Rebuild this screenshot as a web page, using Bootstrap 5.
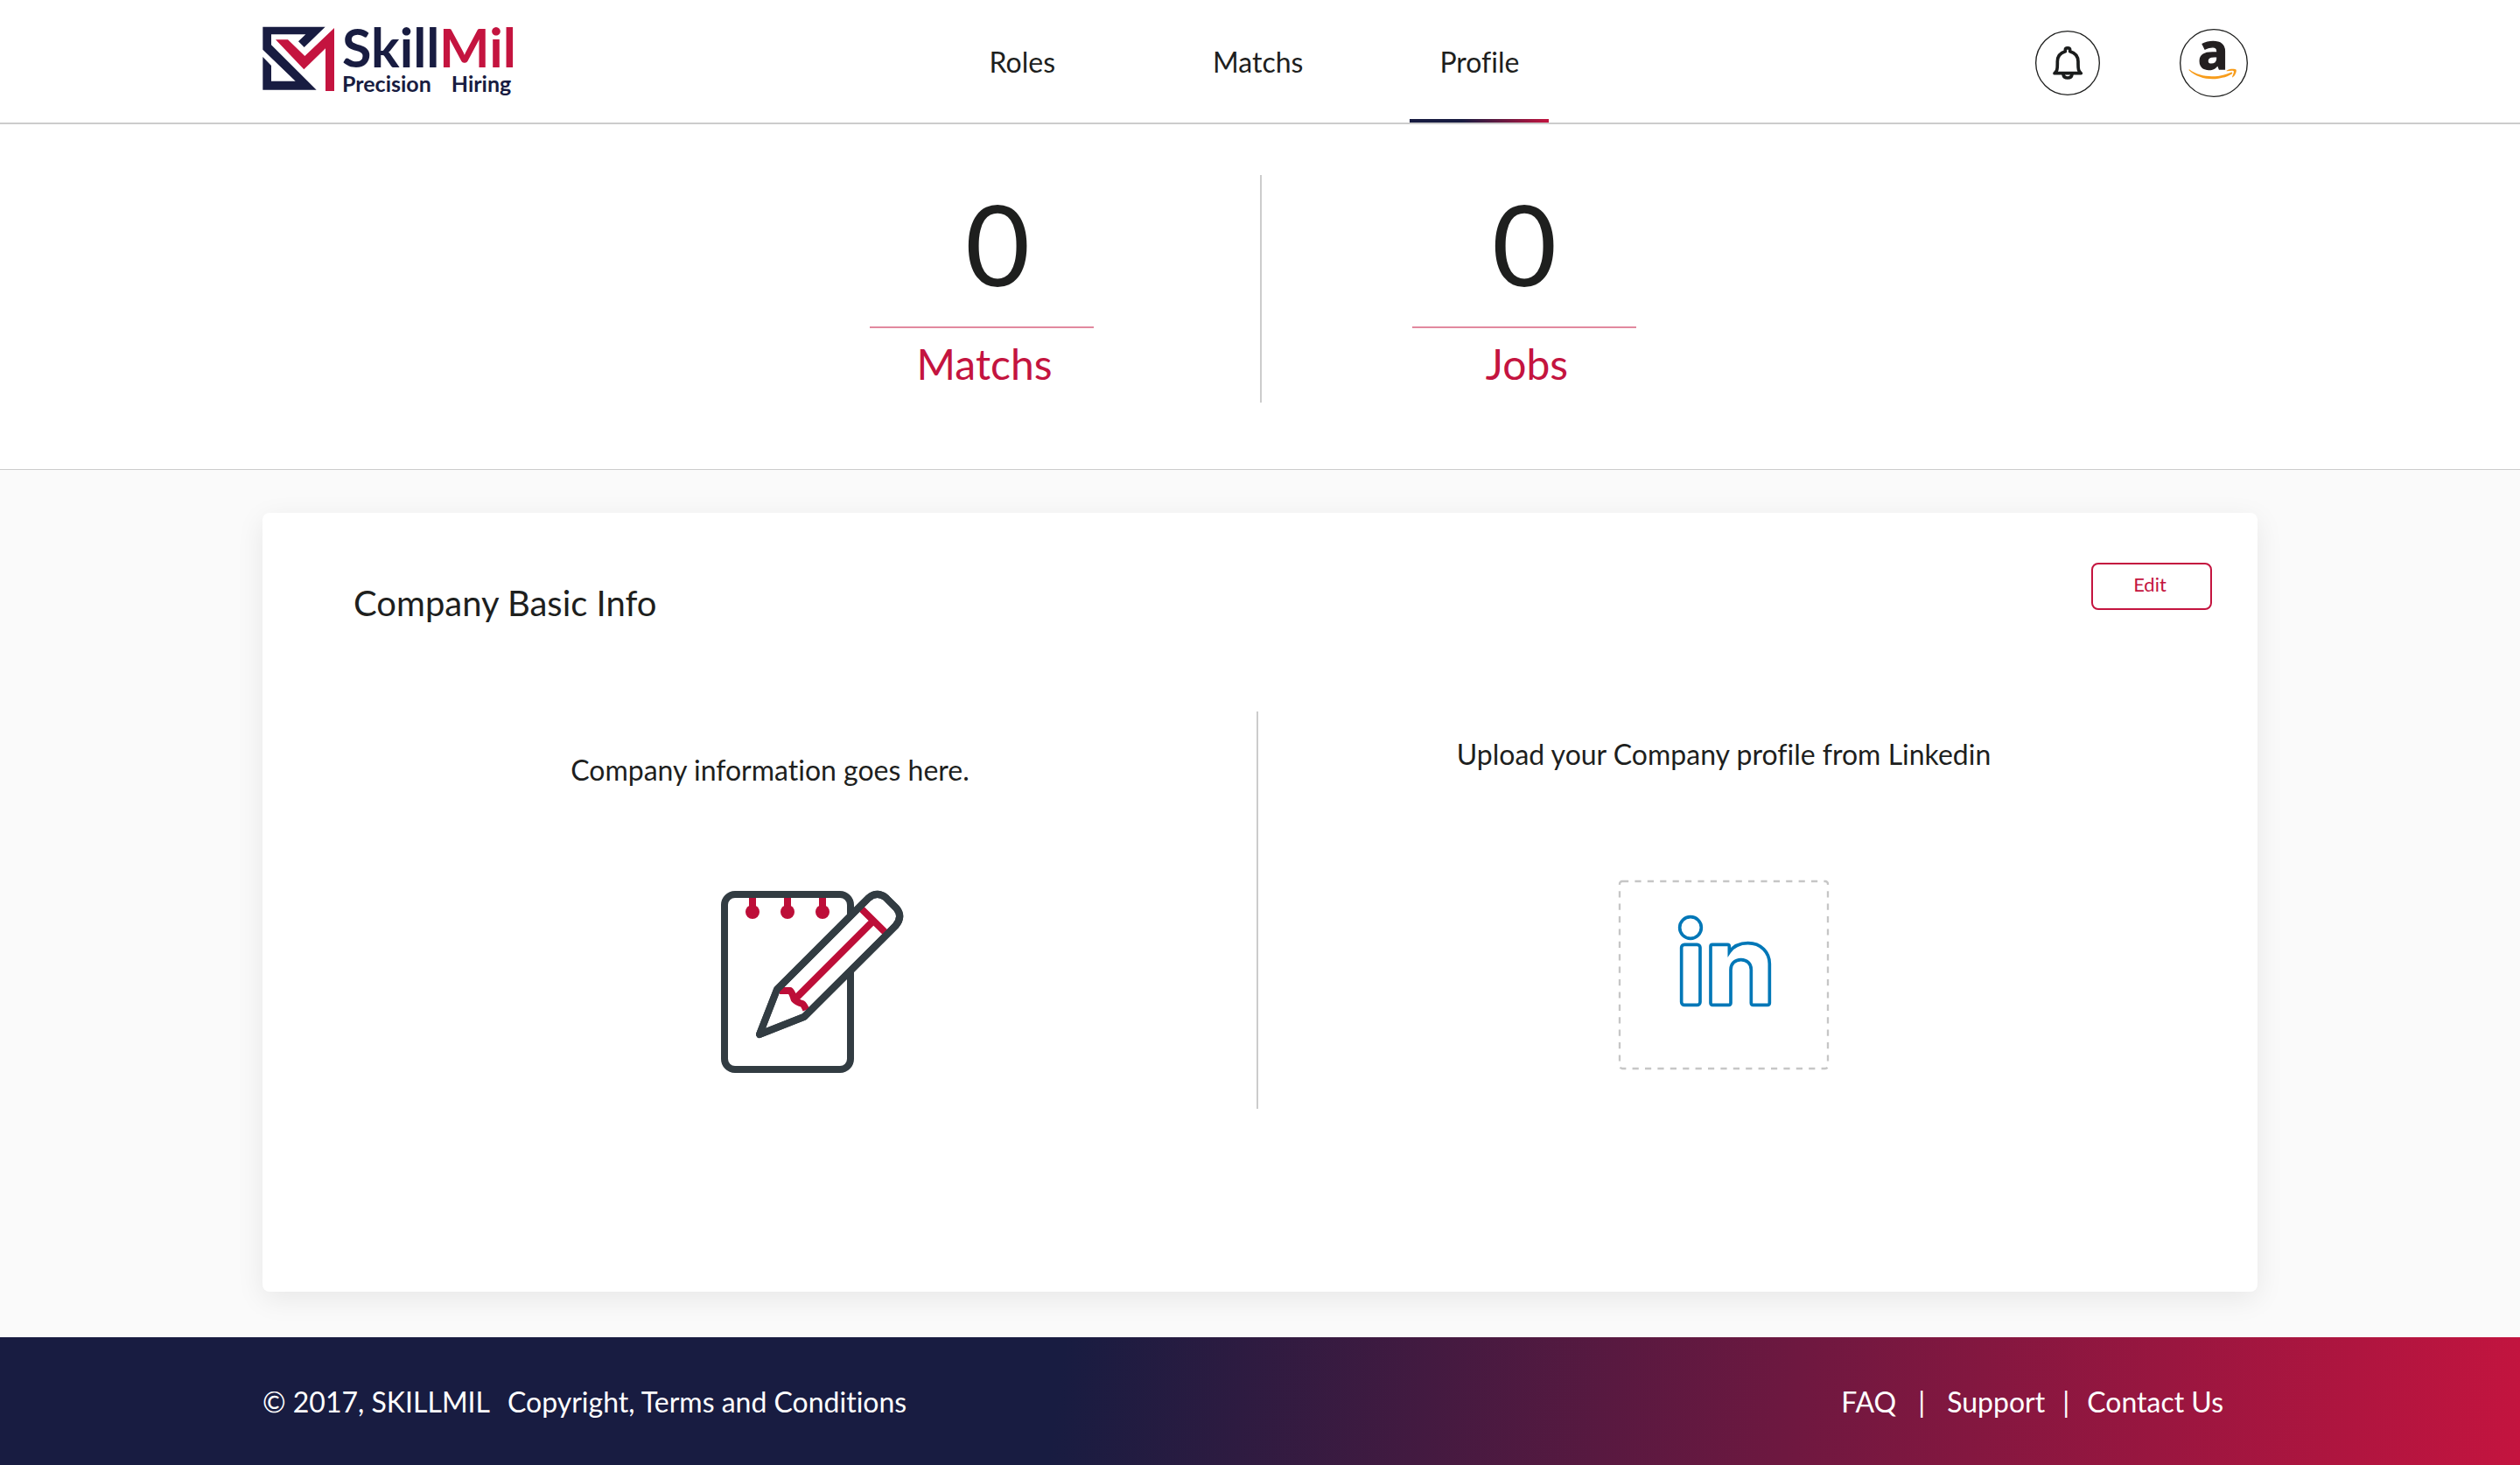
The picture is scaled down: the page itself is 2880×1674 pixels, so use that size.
<!DOCTYPE html>
<html lang="en">
<head>
<meta charset="utf-8">
<meta name="viewport" content="width=device-width, initial-scale=1">
<title>SkillMil – Company Profile</title>
<link href="https://cdn.jsdelivr.net/npm/bootstrap@5.3.0/dist/css/bootstrap.min.css" rel="stylesheet">
<style>
:root { --navy: #181c41; --crimson: #c4143f; --ink: #1e1f1e; --rule: #cccccc; }
body { font-family: Lato, "Noto Sans", sans-serif; font-size: 32px; line-height: 38px; font-variant-ligatures: no-common-ligatures; color: var(--ink); background: #fafafa; }
svg { display: block; flex: none; overflow: visible; }
a { color: inherit; text-decoration: none; }
.shell { width: 100%; max-width: 2280px; margin-inline: auto; }

.site-header { border-bottom: 2px solid var(--rule); }
.site-header .shell { height: 140px; }
.side { flex: 1 1 0; }
.brand { height: 80px; }
.brand-name { font-size: 61px; line-height: 48px; font-weight: 700; color: var(--navy); }
.brand-name span { color: var(--crimson); }
.tagline { font-size: 25px; line-height: 24px; font-weight: 700; color: var(--navy); gap: 23px; margin-top: 5px; }
.main-nav { gap: 88px; padding-right: 2px; }
.main-nav .nav-link { padding: 5px 34px 0; color: var(--ink); border-bottom: 4px solid transparent; }
.main-nav .nav-link.active { border-image: linear-gradient(95deg, var(--navy) 42%, var(--crimson)) 1; }
.main-nav .wide-end { margin-right: 24px; }
.header-tools { gap: 91px; padding: 3px 11px 0 0; }
.round-btn { padding: 0; border: 0; background: none; border-radius: 50%; }

.stats-row { padding: 58px 16px 76px 0; gap: 172px; min-height: 394px; }
.stat { width: 256px; }
.stat-first { margin-right: 18px; }
.stat-number { font-size: 128px; line-height: 156px; }
.stat-first .stat-number { padding-left: 36px; }
.stat-label { font-size: 48px; line-height: 58px; color: var(--crimson); border-top: 2px solid #e2899f; margin-top: 17px; padding: 12px 0 0 6px; }
.v-rule { width: 2px; background: var(--rule); flex: none; }

.profile-card { border: 0; border-radius: 8px; box-shadow: 0 8px 32px rgba(0, 0, 0, .08); margin: 49px auto 52px; padding-bottom: 209px; }
.card-top { padding: 57px 52px 100px 104px; }
.card-top h1 { font-size: 40px; line-height: 48px; font-weight: 400; margin: 22px 0 0; }
.edit-btn { width: 138px; font-size: 22px; line-height: 26px; padding: 10px 4px 14px 0; border: 2px solid var(--crimson); border-radius: 8px; color: var(--crimson); }
.edit-btn:hover { background: var(--crimson); color: #fff; }
.halves { padding-right: 6px; min-height: 454px; }
.half-info { padding: 48px 0 0 24px; gap: 119px; }
.half-info svg { margin-left: 96px; }
.half-upload { padding: 30px 72px 0 0; gap: 125px; }

.site-footer { color: #fff; background: linear-gradient(98deg, var(--navy) 42%, var(--crimson)); padding: 55px 0 53px; }
.foot-left { gap: 20px; }
.foot-right { gap: 20px; padding-right: 39px; }
.foot-help { gap: 25px; }
</style>
</head>
<body>
<header class="site-header bg-white">
  <div class="shell d-flex align-items-stretch">
    <div class="side d-flex align-items-center">
      <a href="#" class="brand d-flex align-items-start" aria-label="SkillMil home">
        <svg width="83" height="75" viewBox="60 60 249 225" aria-hidden="true">
          <path fill="#181c41" d="M61 62H275L203 132L183 112L208 88H90V124L245 278H61V165L90 195V248H173L61 140Z"/>
          <path fill="#c4143f" d="M105 106H147L205 162L306 66V282H276V136L202 208Z"/>
        </svg>
        <span class="d-flex flex-column ps-2">
          <span class="brand-name">Skill<span>Mil</span></span>
          <span class="tagline d-flex"><span>Precision</span><span>Hiring</span></span>
        </span>
      </a>
    </div>
    <nav class="main-nav nav flex-nowrap align-items-stretch" aria-label="Main">
      <a class="nav-link d-flex align-items-center wide-end" href="#">Roles</a>
      <a class="nav-link d-flex align-items-center" href="#">Matchs</a>
      <a class="nav-link d-flex align-items-center active" href="#" aria-current="page">Profile</a>
    </nav>
    <div class="side header-tools d-flex align-items-center justify-content-end">
      <button class="round-btn" type="button" aria-label="Notifications">
        <svg width="74" height="74" viewBox="108 72 222 222">
          <circle cx="219" cy="183" r="109" fill="#fff" stroke="#1e1f1e" stroke-width="4"/>
          <g fill="none" stroke="#1a1c1c" stroke-width="11" stroke-linejoin="round" stroke-linecap="round">
            <path d="M174 218C183 212 184 204 184 185V178C184 158 197 147 211 143V138C211 129 227 129 227 138V143C241 147 255 158 255 178V185C255 204 256 212 265 218Z"/>
            <path d="M204 222C206 238 232 238 234 222"/>
          </g>
        </svg>
      </button>
      <button class="round-btn" type="button" aria-label="Account">
        <svg width="78" height="78" viewBox="603 69 234 234">
          <circle cx="720" cy="186" r="115" fill="#fff" stroke="#1e1f1e" stroke-width="4"/>
          <text x="718" y="208" text-anchor="middle" font-family="Open Sans, sans-serif" font-weight="700" font-size="174" fill="#231f20" stroke="#231f20" stroke-width="4">a</text>
          <path fill="#f79c1b" d="M636 208C675 238 735 238 779 218C785 216 785 221 781 224C740 248 675 249 635 211Q634 208 636 208ZM764 212C775 204 794 206 797 209C799 214 795 228 785 235Q782 236 784 231C788 221 790 216 788 214C785 211 775 213 766 214Q762 214 764 212Z"/>
        </svg>
      </button>
    </div>
  </div>
</header>

<section class="bg-white border-bottom" style="--bs-border-color:#cccccc">
  <div class="stats-row shell d-flex justify-content-center text-center">
    <div class="stat stat-first">
      <div class="stat-number">0</div>
      <div class="stat-label">Matchs</div>
    </div>
    <div class="v-rule"></div>
    <div class="stat">
      <div class="stat-number">0</div>
      <div class="stat-label">Jobs</div>
    </div>
  </div>
</section>

<main>
  <div class="profile-card card shell">
    <div class="card-top d-flex justify-content-between align-items-start">
      <h1>Company Basic Info</h1>
      <button type="button" class="edit-btn btn">Edit</button>
    </div>
    <div class="halves d-flex">
      <div class="half-info w-50 d-flex flex-column align-items-center">
        <div>Company information goes here.</div>
        <svg width="208" height="208" viewBox="72 84 624 624" fill="none" aria-hidden="true">
          <rect x="84" y="96" width="432" height="600" rx="36" stroke="#323c42" stroke-width="24"/>
          <path d="M180 108V150M300 108V150M420 108V150" stroke="#bd0e38" stroke-width="24"/>
          <g fill="#bd0e38"><circle cx="180" cy="156" r="24"/><circle cx="300" cy="156" r="24"/><circle cx="420" cy="156" r="24"/></g>
          <path fill="#fff" stroke="#323c42" stroke-width="24" stroke-linejoin="round" d="M204 576L264 422L577 109Q607 84 637 107L673 143Q697 172 671 203L358 515Z"/>
          <path stroke="#bd0e38" stroke-width="24" stroke-linejoin="round" d="M555 147L634 225M593 188L332 449M273 426H309Q316 433 323 455Q331 465 351 471Q357 475 364 492"/>
          <path stroke="#323c42" stroke-width="24" stroke-linejoin="round" d="M204 576L264 422L577 109Q607 84 637 107L673 143Q697 172 671 203L358 515Z"/>
        </svg>
      </div>
      <div class="v-rule"></div>
      <div class="half-upload w-50 d-flex flex-column align-items-center">
        <div>Upload your Company profile from Linkedin</div>
        <button type="button" class="btn p-0 border-0" aria-label="Upload from Linkedin">
          <svg width="240" height="216" viewBox="90 78 720 648" fill="none">
            <rect x="93" y="81" width="714" height="642" rx="9" stroke="#c6c6c6" stroke-width="7" stroke-dasharray="21.6 21.6"/>
            <g stroke="#0077b7" stroke-width="11">
              <circle cx="336" cy="240" r="37"/>
              <rect x="305" y="298" width="64" height="207" rx="10"/>
              <path d="M411 298H463Q469 298 469 304V324C484 302 504 293 533 293C578 293 607 325 607 364V498Q607 505 600 505H551Q544 505 544 498V384C544 363 529 350 509 350C489 350 474 363 474 384V498Q474 505 467 505H412Q405 505 405 498V304Q405 298 411 298Z"/>
            </g>
          </svg>
        </button>
      </div>
    </div>
  </div>
</main>

<footer class="site-footer">
  <div class="shell d-flex justify-content-between">
    <div class="foot-left d-flex">
      <span>© 2017, SKILLMIL</span>
      <a href="#">Copyright, Terms and Conditions</a>
    </div>
    <div class="foot-right d-flex">
      <div class="foot-help d-flex"><a href="#">FAQ</a><span>|</span><a href="#">Support</a></div>
      <span>|</span><a href="#">Contact Us</a>
    </div>
  </div>
</footer>
<script src="https://cdn.jsdelivr.net/npm/bootstrap@5.3.0/dist/js/bootstrap.bundle.min.js"></script>
</body>
</html>
